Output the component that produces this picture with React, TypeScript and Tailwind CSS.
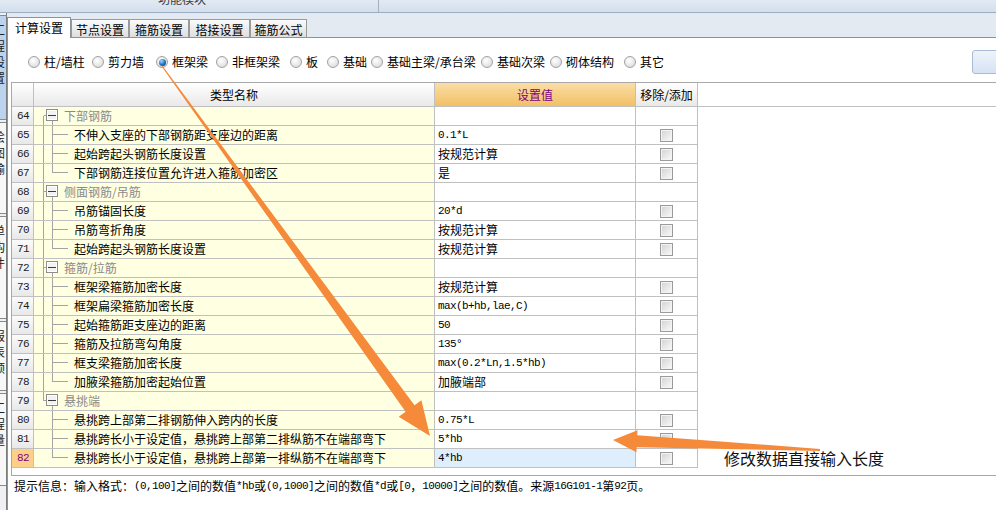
import React from 'react';

type Row = {
  n: number;
  group?: boolean;
  name: string;
  value?: string;
  mono?: boolean;
  last?: boolean;
  selected?: boolean;
};

const rows: Row[] = [
  { n: 64, group: true, name: '下部钢筋' },
  { n: 65, name: '不伸入支座的下部钢筋距支座边的距离', value: '0.1*L', mono: true },
  { n: 66, name: '起始跨起头钢筋长度设置', value: '按规范计算' },
  { n: 67, name: '下部钢筋连接位置允许进入箍筋加密区', value: '是', last: true },
  { n: 68, group: true, name: '侧面钢筋/吊筋' },
  { n: 69, name: '吊筋锚固长度', value: '20*d', mono: true },
  { n: 70, name: '吊筋弯折角度', value: '按规范计算' },
  { n: 71, name: '起始跨起头钢筋长度设置', value: '按规范计算', last: true },
  { n: 72, group: true, name: '箍筋/拉筋' },
  { n: 73, name: '框架梁箍筋加密长度', value: '按规范计算' },
  { n: 74, name: '框架扁梁箍筋加密长度', value: 'max(b+hb,lae,C)', mono: true },
  { n: 75, name: '起始箍筋距支座边的距离', value: '50', mono: true },
  { n: 76, name: '箍筋及拉筋弯勾角度', value: '135°', mono: true },
  { n: 77, name: '框支梁箍筋加密长度', value: 'max(0.2*Ln,1.5*hb)', mono: true },
  { n: 78, name: '加腋梁箍筋加密起始位置', value: '加腋端部', last: true },
  { n: 79, group: true, name: '悬挑端' },
  { n: 80, name: '悬挑跨上部第二排钢筋伸入跨内的长度', value: '0.75*L', mono: true },
  { n: 81, name: '悬挑跨长小于设定值，悬挑跨上部第二排纵筋不在端部弯下', value: '5*hb', mono: true },
  { n: 82, name: '悬挑跨长小于设定值，悬挑跨上部第一排纵筋不在端部弯下', value: '4*hb', mono: true, last: true, selected: true },
];

const radios: [string, number][] = [
  ['柱/墙柱', 64],
  ['剪力墙', 64],
  ['框架梁', 60],
  ['非框架梁', 74],
  ['板', 37],
  ['基础', 44],
  ['基础主梁/承台梁', 110],
  ['基础次梁', 69],
  ['砌体结构', 74],
  ['其它', 40],
];

const tabs: [string, number][] = [
  ['节点设置', 58],
  ['箍筋设置', 60],
  ['搭接设置', 61],
  ['箍筋公式', 57],
];

const mono = "font-['Liberation_Mono',monospace] text-[11px] tracking-[-0.6px]";
const line = '#a4a4a4';

function TreeLines({ row }: { row: Row }) {
  const rootV = row.n === 64 ? 'bottom' : row.n < 79 ? 'full' : row.n === 79 ? 'top' : 'none';
  const w = row.group ? 30 : 40;
  return (
    <svg width={w} height={18} className="shrink-0" shapeRendering="crispEdges">
      {rootV === 'full' && <line x1={9.5} y1={0} x2={9.5} y2={18} stroke={line} />}
      {rootV === 'bottom' && <line x1={9.5} y1={8.5} x2={9.5} y2={18} stroke={line} />}
      {rootV === 'top' && <line x1={9.5} y1={0} x2={9.5} y2={8.5} stroke={line} />}
      {row.group ? (
        <>
          <line x1={9.5} y1={8.5} x2={12} y2={8.5} stroke={line} />
          <rect x={12.5} y={2.5} width={11} height={11} fill="#f2f2f2" stroke="#8e8e8e" />
          <rect x={13.5} y={3.5} width={9} height={9} fill="none" stroke="#ffffff" />
          <line x1={14} y1={8.5} x2={22} y2={8.5} stroke="#3c3c3c" />
          <line x1={18.5} y1={14} x2={18.5} y2={18} stroke={line} />
        </>
      ) : (
        <>
          <line x1={18.5} y1={0} x2={18.5} y2={row.last ? 9 : 18} stroke={line} />
          <line x1={18.5} y1={8.5} x2={34} y2={8.5} stroke={line} />
        </>
      )}
    </svg>
  );
}

function Checkbox() {
  return (
    <div className="w-[13px] h-[13px] border border-[#9a9a9a] bg-linear-to-br from-[#d2d2d2] to-[#fbfbfb] shadow-[inset_0_0_0_1px_#f3f3f3]" />
  );
}

function Radio({ checked }: { checked?: boolean }) {
  return (
    <div className="w-[12px] h-[12px] rounded-full border border-[#a2a2a2] bg-[radial-gradient(circle_at_40%_35%,#ffffff,#d4d4d4)] flex items-center justify-center shrink-0">
      {checked && (
        <div className="w-[7px] h-[7px] rounded-full bg-[radial-gradient(circle_at_35%_30%,#9fd6ff,#1467b8_60%,#0a3f7a)]" />
      )}
    </div>
  );
}

function SideStrip() {
  const boxes: [string, number, boolean][] = [
    ['工程设置', 105, true],
    ['绘图输', 92, false],
    ['单构件', 103, false],
    ['报表预', 70, false],
    ['工程量', 93, false],
  ];
  return (
    <div className="w-[7px] shrink-0 flex flex-col border-r border-[#7c7c7c] bg-[#eef0f3] pt-[2px] gap-[2px] overflow-hidden">
      {boxes.map(([t, h, active]) => (
        <div
          key={t}
          style={{ height: h }}
          className={`shrink-0 border-y border-[#8a8a8a] overflow-hidden flex flex-col items-start pt-[6px] ${
            active ? 'bg-[#bcd3ee]' : 'bg-[#f7f7f7]'
          }`}
        >
          {t.split('').map((c, i) => (
            <span key={i} className="-ml-[7px] leading-[16px] text-[12px] text-[#222]">
              {c}
            </span>
          ))}
        </div>
      ))}
    </div>
  );
}

export default function App() {
  return (
    <div className="relative w-[996px] h-[510px] overflow-hidden bg-white text-[12px] text-black font-['Noto_Sans_CJK_SC',sans-serif]">
      {/* top bar */}
      <div className="h-[13px] flex border-b border-[#9cadc3] bg-linear-to-b from-[#e2eaf4] to-[#d3dfec]">
        <div className="w-[379px] shrink-0 border-r border-[#a5afbb] overflow-hidden">
          <div className="ml-[158px] -mt-[7px] leading-[12px] text-[#3a3a3a]">功能模块</div>
        </div>
        <div className="flex-1" />
      </div>

      <div className="flex h-[497px]">
        <SideStrip />

        <div className="flex-1 flex flex-col min-w-0">
          {/* tabs */}
          <div className="h-[25px] flex items-end border-b border-[#8d939b] bg-[#e3eaf2]">
            <div className="w-[64px] h-[21px] -mb-px bg-white border border-b-0 border-[#8d939b] flex items-center justify-center leading-[14px]">
              计算设置
            </div>
            {tabs.map(([t, w]) => (
              <div
                key={t}
                style={{ width: w }}
                className="h-[18px] border border-b-0 border-[#9a9a9a] bg-linear-to-b from-[#fbfbfb] to-[#dedede] flex items-center justify-center pt-[2px] leading-[14px]"
              >
                {t}
              </div>
            ))}
          </div>

          {/* panel */}
          <div className="flex-1 flex flex-col border-l border-[#8d939b] bg-white">
            <div className="mt-[14px] h-[20px] flex items-center pl-[20px]">
              {radios.map(([t, w], i) => (
                <div key={t} style={{ width: w }} className="flex items-center gap-[4px] shrink-0">
                  <Radio checked={i === 2} />
                  <span className="leading-[14px] whitespace-nowrap">{t}</span>
                </div>
              ))}
              <div className="ml-auto -mr-[20px] w-[44px] h-[24px] shrink-0 rounded-[3px] border border-[#a9bcd5] bg-linear-to-b from-[#eef3fb] to-[#d6e3f4]" />
            </div>

            {/* table container */}
            <div className="mt-[10px] ml-[3px] h-[394px] border-t border-l border-b border-[#a8a8a8]">
              <div className="flex h-[24px] border-b border-[#c0c0c0]">
                <div className="w-[22px] border-r border-[#c0c0c0] bg-linear-to-b from-white to-[#e8e8e8]" />
                <div className="w-[401px] border-r border-[#c0c0c0] bg-linear-to-b from-white to-[#e9e9e9] flex items-center justify-center leading-[14px]">
                  类型名称
                </div>
                <div className="w-[201px] border-r border-[#c0c0c0] bg-linear-to-b from-[#fbdda5] to-[#f1c063] flex items-center justify-center leading-[14px] text-[#800080]">
                  设置值
                </div>
                <div className="w-[62px] border-r border-[#c0c0c0] bg-linear-to-b from-white to-[#e9e9e9] flex items-center justify-center leading-[14px] whitespace-nowrap">
                  移除/添加
                </div>
              </div>

              {rows.map((r) => (
                <div key={r.n} className="flex h-[19px]">
                  <div
                    className={`w-[22px] border-r border-b border-[#c0c0c0] flex items-center pl-[5px] ${mono} ${
                      r.selected
                        ? 'bg-[#fdd08a] text-[#800080]'
                        : 'bg-linear-to-b from-[#fbfbfb] to-[#e8e8e8] text-[#222]'
                    }`}
                  >
                    {r.n}
                  </div>
                  <div className="w-[401px] border-r border-b border-[#c0c0c0] bg-[#ffffe1] flex items-center">
                    <TreeLines row={r} />
                    <span className={`leading-[14px] whitespace-nowrap ${r.group ? 'text-[#8a8a8a]' : 'text-black'}`}>
                      {r.name}
                    </span>
                  </div>
                  <div
                    className={`w-[201px] border-r border-b border-[#c0c0c0] flex items-center pl-[3px] ${
                      r.selected ? 'bg-[#dfeefc]' : 'bg-white'
                    }`}
                  >
                    {r.value && (
                      <span className={r.mono ? mono : 'leading-[14px]'}>{r.value}</span>
                    )}
                  </div>
                  <div className="w-[62px] border-r border-b border-[#c0c0c0] flex items-center justify-center">
                    {!r.group && <Checkbox />}
                  </div>
                </div>
              ))}
            </div>

            {/* hint */}
            <div className="mt-[3px] pl-[6px] leading-[14px] whitespace-nowrap flex items-center">
              <span>提示信息：输入格式：</span>
              <span className={mono}>(0,100]</span>
              <span>之间的数值</span>
              <span className={mono}>*hb</span>
              <span>或</span>
              <span className={mono}>(0,1000]</span>
              <span>之间的数值</span>
              <span className={mono}>*d</span>
              <span>或</span>
              <span className={mono}>[0</span>
              <span>，</span>
              <span className={mono}>10000]</span>
              <span>之间的数值。来源</span>
              <span className={mono}>16G101-1</span>
              <span>第</span>
              <span className={mono}>92</span>
              <span>页。</span>
            </div>
          </div>
        </div>
      </div>

      {/* annotation arrows */}
      <svg className="absolute left-0 top-0 pointer-events-none" width={996} height={510}>
        <polygon
          fill="#f58a3b"
          points="162.49,65.65 414.51,405.23 421.4,400.25 430,436 398.72,416.67 405.61,411.69 161.51,66.35"
        />
        <polygon
          fill="#f58a3b"
          points="613,440 637.5,430.17 637.26,435.17 820.05,449 819.95,451 636.68,447.15 636.44,452.15"
        />
      </svg>
      <div className="absolute left-[724px] top-[448px] text-[16px] leading-[20px] text-[#111] whitespace-nowrap">
        修改数据直接输入长度
      </div>
    </div>
  );
}
